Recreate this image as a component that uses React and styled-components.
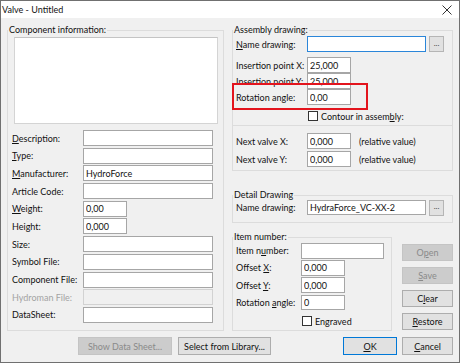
import React from "react"
import styled, { createGlobalStyle } from "styled-components"

const GlobalStyle = createGlobalStyle`
  html, body {
    margin: 0;
    padding: 0;
    background: #ffffff;
  }
  body {
    font-family: Lato, "Noto Sans", sans-serif;
    font-size: 9px;
    color: #111;
  }
  * {
    box-sizing: border-box;
  }
`

const Window = styled.div`
  width: 460px;
  height: 363px;
  border: 1px solid #707070;
  background: #f0f0f0;
  display: flex;
  flex-direction: column;
`
const TitleBar = styled.div`
  height: 17px;
  flex-shrink: 0;
  background: #ffffff;
  display: flex;
  align-items: center;
  justify-content: space-between;
  padding: 0 7px 0 1px;
`
const Title = styled.span`
  font-size: 9px;
`
const Body = styled.div`
  flex: 1;
  padding: 6px 6px 0 6px;
  display: flex;
  flex-direction: column;
`
const Main = styled.div`
  display: grid;
  grid-template-columns: 217px 1fr;
  column-gap: 8px;
  height: 307px;
`
const Column = styled.div`
  display: flex;
  flex-direction: column;
`
const Group = styled.fieldset`
  margin: ${(p) => p.$mt || 0}px 0 0 0;
  padding: 0;
  border: 1px solid #dcdcdc;
  min-width: 0;
  width: ${(p) => (p.$w ? `${p.$w}px` : "auto")};
  height: ${(p) => p.$h}px;
  flex-shrink: 0;
`
const Legend = styled.legend`
  padding: 0 1px;
  margin-left: 0;
  line-height: 12px;
  font-size: 9px;
`
const Box = styled.div`
  margin-top: -1px;
  border: 1px solid #dcdcdc;
  height: 46px;
  padding: 7px 0 0 3px;
  display: flex;
  flex-direction: column;
  gap: 2px;
  flex-shrink: 0;
`
const Inner = styled.div`
  padding: ${(p) => p.$pad};
  display: flex;
  flex-direction: column;
`
const Memo = styled.div`
  margin-left: 2px;
  width: 204px;
  height: 87px;
  background: #ffffff;
  border: 1px solid #d4d4d4;
  border-top-color: #c4c4c4;
`
const Rows = styled.div`
  margin-top: ${(p) => p.$mt || 0}px;
  display: flex;
  flex-direction: column;
  gap: ${(p) => p.$gap}px;
`
const Row = styled.div`
  position: relative;
  display: flex;
  align-items: center;
  height: ${(p) => p.$h || 16}px;
  margin-top: ${(p) => p.$mt || 0}px;
  flex-shrink: 0;
`
const Label = styled.span`
  width: ${(p) => p.$w || 71}px;
  flex-shrink: 0;
  white-space: nowrap;
  color: ${(p) => (p.$disabled ? "#a3a3a3" : "inherit")};
`
const Field = styled.input`
  width: ${(p) => p.$w}px;
  height: 100%;
  margin: 0;
  padding: 0 2px;
  font: inherit;
  font-size: 9px;
  color: #111;
  background: ${(p) => (p.disabled ? "#f0f0f0" : "#ffffff")};
  border: 1px solid ${(p) => (p.disabled ? "#d2d2d2" : p.$focus ? "#2b86d9" : "#a6a6a6")};
  border-radius: 0;
  outline: none;
`
const Note = styled.span`
  margin-left: 8px;
`
const Browse = styled.button`
  margin-left: 3px;
  width: 15px;
  height: 16px;
  padding: 0 0 3px;
  font: inherit;
  font-size: 8px;
  line-height: 1;
  color: #444;
  background: #e1e1e1;
  border: 1px solid #b5b5b5;
`
const Highlight = styled.div`
  position: absolute;
  left: -4px;
  top: -6px;
  width: 136px;
  height: 27px;
  border: 2px solid #e3141d;
  pointer-events: none;
`
const CheckRow = styled.label`
  display: flex;
  align-items: center;
  gap: 3px;
  height: 10px;
  margin: ${(p) => p.$mt}px 0 0 ${(p) => p.$ml}px;
`
const Check = styled.span`
  width: 10px;
  height: 10px;
  background: #ffffff;
  border: 1px solid #333333;
`
const Bottom = styled.div`
  display: flex;
  margin-top: 8px;
`
const SideButtons = styled.div`
  margin-left: 10px;
  padding-top: 13px;
  display: flex;
  flex-direction: column;
  gap: 6px;
  width: 51px;
`
const Button = styled.button`
  width: ${(p) => (p.$w ? `${p.$w}px` : "100%")};
  height: ${(p) => p.$h || 17}px;
  margin: 0;
  padding: 0;
  font: inherit;
  font-size: 9px;
  color: #111;
  background: #e1e1e1;
  border: 1px solid ${(p) => (p.$default ? "#0078d7" : "#adadad")};
  &:disabled {
    color: #8a8a8a;
    background: #cccccc;
    border-color: #c4c4c4;
  }
`
const Footer = styled.div`
  display: flex;
  gap: 6px;
  margin-top: 6px;
  padding-left: 71px;
  & > :nth-child(3) {
    margin-left: auto;
  }
  & > :nth-child(4) {
    margin-left: -1px;
  }
`

function CloseIcon() {
  return (
    <svg width="10" height="10" viewBox="0 0 10 10">
      <path d="M0.5 0.5 L9.5 9.5 M9.5 0.5 L0.5 9.5" stroke="#333" strokeWidth="1" />
    </svg>
  )
}

function Input({ w, value = "", ...rest }) {
  return <Field $w={w} defaultValue={value} {...rest} />
}

export default function App() {
  return (
    <>
      <GlobalStyle />
      <Window>
        <TitleBar>
          <Title>Valve - Untitled</Title>
          <CloseIcon />
        </TitleBar>
        <Body>
          <Main>
            <Group $h={307}>
              <Legend>Component information:</Legend>
              <Inner $pad="1px 6px 0 4px">
                <Memo />
                <Rows $mt={6} $gap={1.7}>
                  <Row>
                    <Label><u>D</u>escription:</Label>
                    <Input w={130} />
                  </Row>
                  <Row>
                    <Label><u>T</u>ype:</Label>
                    <Input w={130} />
                  </Row>
                  <Row>
                    <Label><u>M</u>anufacturer:</Label>
                    <Input w={130} value="HydroForce" />
                  </Row>
                  <Row>
                    <Label>Article Code:</Label>
                    <Input w={130} />
                  </Row>
                  <Row>
                    <Label><u>W</u>eight:</Label>
                    <Input w={44} value="0,00" />
                  </Row>
                  <Row>
                    <Label>Height:</Label>
                    <Input w={44} value="0,000" />
                  </Row>
                  <Row>
                    <Label>Size:</Label>
                    <Input w={130} />
                  </Row>
                  <Row>
                    <Label>Symbol File:</Label>
                    <Input w={130} />
                  </Row>
                  <Row>
                    <Label>Component File:</Label>
                    <Input w={130} />
                  </Row>
                  <Row>
                    <Label $disabled>Hydroman File:</Label>
                    <Input w={130} disabled />
                  </Row>
                  <Row>
                    <Label>DataSheet:</Label>
                    <Input w={130} />
                  </Row>
                </Rows>
              </Inner>
            </Group>

            <Column>
              <Group $h={102}>
                <Legend>Assembly drawing:</Legend>
                <Inner $pad="0 0 0 3px">
                  <Row>
                    <Label><u>N</u>ame drawing:</Label>
                    <Input w={119} $focus />
                    <Browse>...</Browse>
                  </Row>
                  <Rows $mt={5} $gap={0}>
                    <Row>
                      <Label>Insertion point X:</Label>
                      <Input w={44} value="25,000" />
                    </Row>
                    <Row>
                      <Label>Insertion point Y:</Label>
                      <Input w={44} value="25,000" />
                    </Row>
                    <Row>
                      <Label>Rotation angle:</Label>
                      <Input w={44} value="0,00" />
                      <Highlight />
                    </Row>
                  </Rows>
                  <CheckRow $mt={6} $ml={72}>
                    <Check />
                    <span>Contour in assem<u>b</u>ly:</span>
                  </CheckRow>
                </Inner>
              </Group>

              <Box>
                <Row>
                  <Label>Next valve X:</Label>
                  <Input w={44} value="0,000" />
                  <Note>(relative value)</Note>
                </Row>
                <Row>
                  <Label>Next valve Y:</Label>
                  <Input w={44} value="0,000" />
                  <Note>(relative value)</Note>
                </Row>
              </Box>

              <Group $h={34} $mt={18}>
                <Legend>Detail Drawing</Legend>
                <Inner $pad="0 0 0 3px">
                  <Row $h={15} $mt={-1}>
                    <Label>Name drawing:</Label>
                    <Input w={119} value="HydraForce_VC-XX-2" />
                    <Browse>...</Browse>
                  </Row>
                </Inner>
              </Group>

              <Bottom>
                <Group $h={100} $w={160}>
                  <Legend>Item number:</Legend>
                  <Inner $pad="0 0 0 3px">
                    <Rows $gap={1.7}>
                      <Row $h={15.5}>
                        <Label $w={65}>Item n<u>u</u>mber:</Label>
                        <Input w={83} />
                      </Row>
                      <Row $h={15.5}>
                        <Label $w={65}>Offset <u>X</u>:</Label>
                        <Input w={44} value="0,000" />
                      </Row>
                      <Row $h={15.5}>
                        <Label $w={65}>Offset <u>Y</u>:</Label>
                        <Input w={44} value="0,000" />
                      </Row>
                      <Row $h={15.5}>
                        <Label $w={65}>Rotation <u>a</u>ngle:</Label>
                        <Input w={44} value="0" />
                      </Row>
                    </Rows>
                    <CheckRow $mt={6} $ml={66}>
                      <Check />
                      <span>Engraved</span>
                    </CheckRow>
                  </Inner>
                </Group>
                <SideButtons>
                  <Button disabled>O<u>p</u>en</Button>
                  <Button disabled><u>S</u>ave</Button>
                  <Button>C<u>l</u>ear</Button>
                  <Button><u>R</u>estore</Button>
                </SideButtons>
              </Bottom>
            </Column>
          </Main>

          <Footer>
            <Button $w={94} $h={18} disabled>Show Data Sheet...</Button>
            <Button $w={93} $h={18}>Select from Library...</Button>
            <Button $w={54} $h={18} $default><u>O</u>K</Button>
            <Button $w={51} $h={18}><u>C</u>ancel</Button>
          </Footer>
        </Body>
      </Window>
    </>
  )
}
